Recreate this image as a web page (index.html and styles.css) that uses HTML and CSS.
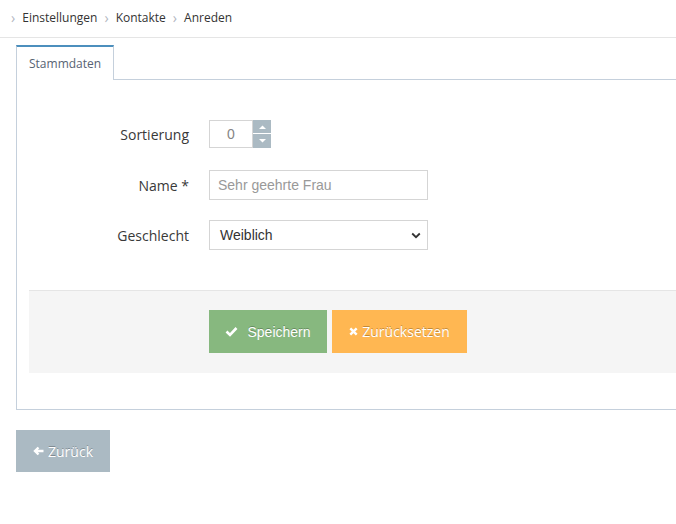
FILE: index.html
```html
<!DOCTYPE html>
<html lang="de">
<head>
<meta charset="utf-8">
<title>Anreden</title>
<link rel="stylesheet" href="styles.css">
</head>
<body>
<div class="breadcrumbs">
  <span class="sep">&#8250;</span><span class="crumb">Einstellungen</span>
  <span class="sep">&#8250;</span><span class="crumb">Kontakte</span>
  <span class="sep">&#8250;</span><span class="crumb">Anreden</span>
</div>
<div class="page">
  <div class="tabs">
    <div class="tab active">Stammdaten</div>
  </div>
  <div class="panel">
    <form class="form">
      <div class="row">
        <label class="lbl">Sortierung</label>
        <div class="spinner">
          <input class="num" type="text" value="0">
          <div class="spin-btns">
            <span class="spin up"><svg width="7" height="4" viewBox="0 0 7 4"><path d="M0 4 L3.5 0.5 L7 4 Z" fill="#fff"/></svg></span>
            <span class="spin down"><svg width="7" height="4" viewBox="0 0 7 4"><path d="M0 0 L3.5 3.5 L7 0 Z" fill="#fff"/></svg></span>
          </div>
        </div>
      </div>
      <div class="row">
        <label class="lbl">Name *</label>
        <input class="text" type="text" placeholder="Sehr geehrte Frau">
      </div>
      <div class="row">
        <label class="lbl">Geschlecht</label>
        <div class="select">
          <span>Weiblich</span>
          <svg width="10" height="7" viewBox="0 0 10 7"><path d="M1.2 1.5 L5 5.2 L8.8 1.5" fill="none" stroke="#333" stroke-width="1.8"/></svg>
        </div>
      </div>
      <div class="actions">
        <button type="button" class="btn btn-success"><svg width="13" height="11" viewBox="0 0 13 11"><path d="M1.5 5.5 L5 9 L11.5 2" fill="none" stroke="#fff" stroke-width="2.6"/></svg>Speichern</button>
        <button type="button" class="btn btn-warning"><svg width="9" height="9" viewBox="0 0 9 9"><path d="M1.3 1.3 L7.7 7.7 M7.7 1.3 L1.3 7.7" stroke="#fff" stroke-width="2.4"/></svg>Zurücksetzen</button>
      </div>
    </form>
  </div>
  <button type="button" class="btn btn-grey"><svg width="11" height="10" viewBox="0 0 11 10"><path d="M10.5 5 H2.5 M5.5 1.5 L2 5 L5.5 8.5" fill="none" stroke="#fff" stroke-width="2.4"/></svg>Zurück</button>
</div>
</body>
</html>
```

FILE: styles.css
```css
html, body { margin: 0; padding: 0; overflow: hidden; }
body {
  font-family: "Open Sans", sans-serif;
  font-size: 13px;
  color: #393939;
  background: #fff;
  width: 676px;
}
.breadcrumbs {
  height: 38px;
  border-bottom: 1px solid #e5e5e5;
  display: flex;
  align-items: center;
  padding-left: 11px;
  padding-bottom: 2px;
  box-sizing: border-box;
  color: #333;
  font-size: 12px;
}
.sep { color: #b2b6bf; margin: 0 7px 0 0; font-size: 14px; }
.crumb { margin-right: 7px; }
.page { padding: 7px 0 0 16px; }
.tabs { display: flex; position: relative; z-index: 1; }
.tab {
  height: 35px;
  box-sizing: border-box;
  padding: 8px 12px 0;
  border: 1px solid #c5d0dc;
  border-top: 2px solid #4c8fbd;
  border-bottom: none;
  background: #fff;
  color: #576373;
  font-size: 12px;
  margin-bottom: -1px;
}
.panel {
  border: 1px solid #c5d0dc;
  border-right: none;
  width: 720px;
  padding: 40px 0 36px 12px;
}
.form { display: flex; flex-direction: column; }
.row {
  display: flex;
  align-items: center;
  height: 30px;
  margin-bottom: 20px;
}
.row:first-child { height: 28px; margin-bottom: 22px; }
.lbl {
  width: 180px;
  text-align: right;
  padding-right: 20px;
  box-sizing: border-box;
  font-size: 14px;
  color: #393939;
}
.spinner { display: flex; height: 28px; }
.num {
  width: 44px;
  height: 28px;
  box-sizing: border-box;
  border: 1px solid #d5d5d5;
  text-align: center;
  font-family: "Liberation Sans", Arial, sans-serif;
  font-size: 14px;
  color: #858585;
  padding: 0;
  outline: none;
}
.spin-btns { display: flex; flex-direction: column; width: 18px; }
.spin {
  height: 14px;
  background: #abbac3;
  display: flex;
  align-items: center;
  justify-content: center;
}
.spin.up { border-bottom: 1px solid #fff; height: 13px; }
.text {
  width: 219px;
  height: 30px;
  box-sizing: border-box;
  border: 1px solid #d5d5d5;
  padding: 0 8px;
  font-family: "Liberation Sans", Arial, sans-serif;
  font-size: 14px;
  color: #858585;
  outline: none;
}
.text::placeholder { color: #999; }
.select {
  width: 219px;
  height: 30px;
  box-sizing: border-box;
  border: 1px solid #d5d5d5;
  padding: 0 6px 0 10px;
  display: flex;
  align-items: center;
  justify-content: space-between;
  font-family: "Liberation Sans", Arial, sans-serif;
  font-size: 14px;
  color: #333;
}
.actions {
  margin-top: 20px;
  background: #f5f5f5;
  border-top: 1px solid #e5e5e5;
  padding: 19px 0 20px 180px;
  display: flex;
  gap: 5px;
}
.btn {
  border: none;
  color: #fff;
  font-size: 14px;
  height: 43px;
  display: inline-flex;
  align-items: center;
  justify-content: center;
  gap: 8px;
  cursor: pointer;
  padding: 0;
  text-shadow: 0 -1px 0 rgba(0,0,0,0.25);
}
.btn-success {
  background: #87b87f;
  width: 118px;
  font-family: "Liberation Sans", Arial, sans-serif;
  gap: 9px;
}
.btn-warning {
  background: #ffb752;
  width: 135px;
  font-family: "Open Sans", sans-serif;
  gap: 4px;
}
.btn-grey {
  margin-top: 20px;
  background: #abbac3;
  width: 94px;
  height: 42px;
  font-family: "Open Sans", sans-serif;
  gap: 4px;
}
```
